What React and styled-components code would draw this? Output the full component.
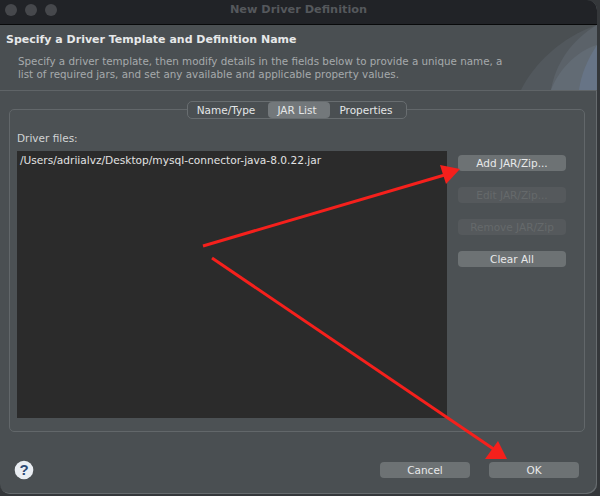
import React from "react";
import styled, { createGlobalStyle } from "styled-components";

const Global = createGlobalStyle`
  html, body { margin: 0; padding: 0; background: #34373a; }
  * { box-sizing: border-box; }
`;
const Page = styled.div`
  width: 600px; height: 496px; overflow: hidden; position: relative;
  font-family: "DejaVu Sans", sans-serif;
`;
const Win = styled.div`
  width: 597px; height: 494px; background: #4a4f52; border-radius: 0 10px 10px 10px;
  display: flex; flex-direction: column; overflow: hidden;
  box-shadow: inset -1px -1px 0 #666b6e;
`;
const TitleBar = styled.div`
  height: 25px; flex: none; background: #212327; border-bottom: 1px solid #08090a;
  display: flex; align-items: flex-start; padding: 4px 0 0 5px; position: relative;
`;
const Dot = styled.span`
  width: 12px; height: 12px; border-radius: 50%; background: #46484c; margin-right: 8px;
`;
const WinTitle = styled.div`
  position: absolute; left: 0; right: 0; top: 3px; text-align: center;
  font-size: 11.3px; font-weight: 700; color: #55585c;
`;
const Banner = styled.div`
  height: 66px; flex: none; position: relative; overflow: hidden;
  border-bottom: 1px solid #5f6467; padding: 7px 0 0 6px;
`;
const Heading = styled.div`
  font-size: 11px; font-weight: 700; color: #e6e8e9; line-height: 15px;
`;
const Sub = styled.div`
  font-size: 10.34px; line-height: 13px; color: #a6aaac; margin: 8px 0 0 12px; white-space: pre;
`;
const Swoosh = styled.svg`
  position: absolute; right: 0; top: 0;
`;
const Body = styled.div`
  flex: 1; padding: 9px 9px 0 9px; display: flex; flex-direction: column; position: relative;
`;
const Tabs = styled.div`
  position: absolute; top: 10px; left: 187px; height: 18px; display: flex; z-index: 1;
  border: 1px solid #686d70; border-radius: 5px; background: #4a4f52;
  font-size: 10.5px; color: #e4e6e7;
`;
const Tab = styled.div`
  width: ${p => p.$w}px; padding-right: 4px; text-align: center; line-height: 16px; border-radius: 4px;
  background: ${p => (p.$active ? "#73787b" : "transparent")};
`;
const Group = styled.div`
  flex: none; margin-top: 9px; width: 576px; height: 323px; border: 1px solid #62676a; border-radius: 5px;
  background: #4c5154; padding: 22px 7px 0 7px;
`;
const Label = styled.div`
  font-size: 10.5px; color: #d2d4d5; line-height: 13px; margin-bottom: 6px;
`;
const Columns = styled.div`
  display: flex; gap: 11px;
`;
const FileList = styled.div`
  width: 430px; height: 267px; background: #2b2b2b; padding: 2px 3px;
  font-size: 10.6px; line-height: 14px; color: #e2e2e2;
`;
const Side = styled.div`
  display: flex; flex-direction: column; gap: 16px; padding-top: 4px;
`;
const Btn = styled.div`
  width: 108px; height: 16px; border-radius: 4px; text-align: center; line-height: 16px; font-size: 10.5px;
  background: ${p => (p.$off ? "#55595c" : "#6d7274")};
  color: ${p => (p.$off ? "#65696b" : "#e8e9ea")};
`;
const Footer = styled.div`
  flex: 1; display: flex; align-items: flex-start; padding: 30px 9px 0 5px;
`;
const Help = styled.svg`
  flex: none; margin-top: -2px;
`;
const Spacer = styled.div`flex: 1;`;
const FootBtn = styled.div`
  width: 90px; height: 16px; border-radius: 4px; background: #6d7274; color: #e8e9ea;
  text-align: center; font-size: 10.5px; line-height: 16px; margin-left: 19px;
`;
const Arrows = styled.svg`
  position: absolute; left: 0; top: 0; pointer-events: none;
`;

export default function App() {
  return (
    <Page>
      <Global />
      <Win>
        <TitleBar>
          <Dot /><Dot /><Dot />
          <WinTitle>New Driver Definition</WinTitle>
        </TitleBar>
        <Banner>
          <Heading>Specify a Driver Template and Definition Name</Heading>
          <Sub>{"Specify a driver template, then modify details in the fields below to provide a unique name, a\nlist of required jars, and set any available and applicable property values."}</Sub>
          <Swoosh width="76" height="65" viewBox="0 0 76 65">
            <path d="M0 65 C12 40 40 12 76 0 V65 Z" fill="#52585d" />
            <path d="M30 65 C34 40 50 15 76 0 V65 Z" fill="#5b6269" />
            <path d="M30 65 C36 48 54 26 76 20 V65 Z" fill="#626b74" />
            <path d="M58 65 C60 50 66 35 76 20 V65 Z" fill="#677486" />
          </Swoosh>
        </Banner>
        <Body>
          <Tabs>
            <Tab $w={80}>Name/Type</Tab>
            <Tab $w={62} $active>JAR List</Tab>
            <Tab $w={76}>Properties</Tab>
          </Tabs>
          <Group>
            <Label>Driver files:</Label>
            <Columns>
              <FileList>/Users/adriialvz/Desktop/mysql-connector-java-8.0.22.jar</FileList>
              <Side>
                <Btn>Add JAR/Zip...</Btn>
                <Btn $off>Edit JAR/Zip...</Btn>
                <Btn $off>Remove JAR/Zip</Btn>
                <Btn>Clear All</Btn>
              </Side>
            </Columns>
          </Group>
          <Footer>
            <Help width="20" height="20" viewBox="0 0 20 20">
              <circle cx="10" cy="10" r="9.3" fill="#e9edf2" />
              <text x="10" y="15" textAnchor="middle" fontSize="15" fontWeight="700" fontFamily="Liberation Sans" fill="#2d4a75">?</text>
            </Help>
            <Spacer />
            <FootBtn>Cancel</FootBtn>
            <FootBtn>OK</FootBtn>
          </Footer>
        </Body>
      </Win>
      <Arrows width="600" height="496" viewBox="0 0 600 496">
        <path d="M203 246 L448 174" stroke="#f5201c" strokeWidth="3" fill="none" />
        <path d="M440 165 L460 169 L446 184 Z" fill="#f5201c" />
        <path d="M212 258 L498 452" stroke="#f5201c" strokeWidth="3" fill="none" />
        <path d="M498 441 L507 459 L485 459 Z" fill="#f5201c" />
      </Arrows>
    </Page>
  );
}
